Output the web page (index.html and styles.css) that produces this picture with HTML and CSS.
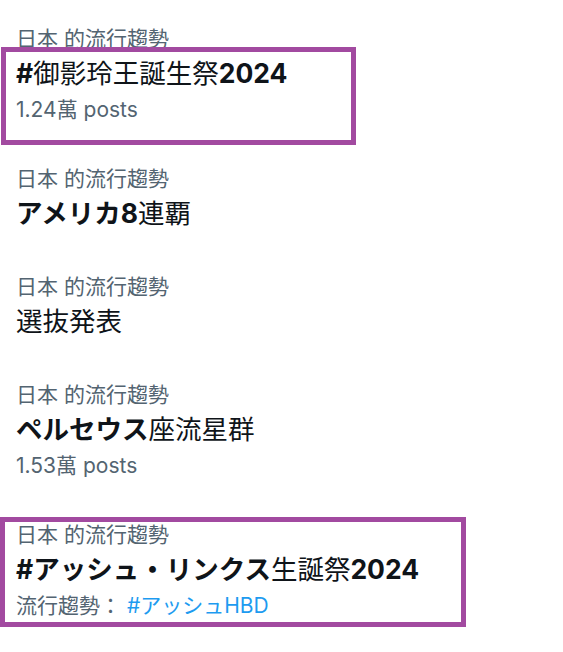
FILE: index.html
```html
<!DOCTYPE html>
<html lang="ja">
<head>
<meta charset="utf-8">
<link rel="stylesheet" href="styles.css">
</head>
<body>
<div class="list">
  <div class="trend">
    <div class="ctx">日本 的流行趨勢</div>
    <div class="title">#<span class="k">御影玲王誕生祭</span>2024</div>
    <div class="sub">1.24萬 posts</div>
    <div class="mark mark-1"></div>
  </div>
  <div class="trend">
    <div class="ctx">日本 的流行趨勢</div>
    <div class="title">アメリカ8<span class="k">連覇</span></div>
  </div>
  <div class="trend">
    <div class="ctx">日本 的流行趨勢</div>
    <div class="title"><span class="k">選抜発表</span></div>
  </div>
  <div class="trend">
    <div class="ctx">日本 的流行趨勢</div>
    <div class="title">ペルセウス<span class="k">座流星群</span></div>
    <div class="sub">1.53萬 posts</div>
  </div>
  <div class="trend">
    <div class="ctx">日本 的流行趨勢</div>
    <div class="title">#アッシュ・リンクス<span class="k">生誕祭</span>2024</div>
    <div class="sub">流行趨勢： <span class="link">#アッシュHBD</span></div>
    <div class="mark mark-2"></div>
  </div>
</div>
</body>
</html>
```
FILE: styles.css
```css
html, body {
  margin: 0;
  padding: 0;
  background: #ffffff;
}
body {
  width: 563px;
  height: 652px;
  overflow: hidden;
  font-family: Inter, "Noto Sans CJK JP", sans-serif;
}
.list {
  padding-top: 6px;
  display: flex;
  flex-direction: column;
}
.trend {
  position: relative;
  padding: 20px 16px;
  display: flex;
  flex-direction: column;
}
.ctx {
  font-size: 21px;
  line-height: 26px;
  color: #536471;
  font-weight: 400;
  white-space: nowrap;
}
.title {
  font-size: 26.5px;
  line-height: 42px;
  color: #0f1419;
  font-weight: 700;
  white-space: nowrap;
}
.title .k {
  font-weight: 400;
}
.sub {
  font-size: 21px;
  line-height: 32px;
  color: #536471;
  white-space: nowrap;
}
.link {
  color: #1d9bf0;
}
.mark {
  position: absolute;
  border: 5px solid #a24aa0;
  box-sizing: border-box;
  pointer-events: none;
}
.mark-1 {
  top: 41px;
  left: 1px;
  width: 355px;
  height: 98px;
}
.mark-2 {
  top: 15px;
  left: 0;
  width: 466px;
  height: 110px;
}
```
